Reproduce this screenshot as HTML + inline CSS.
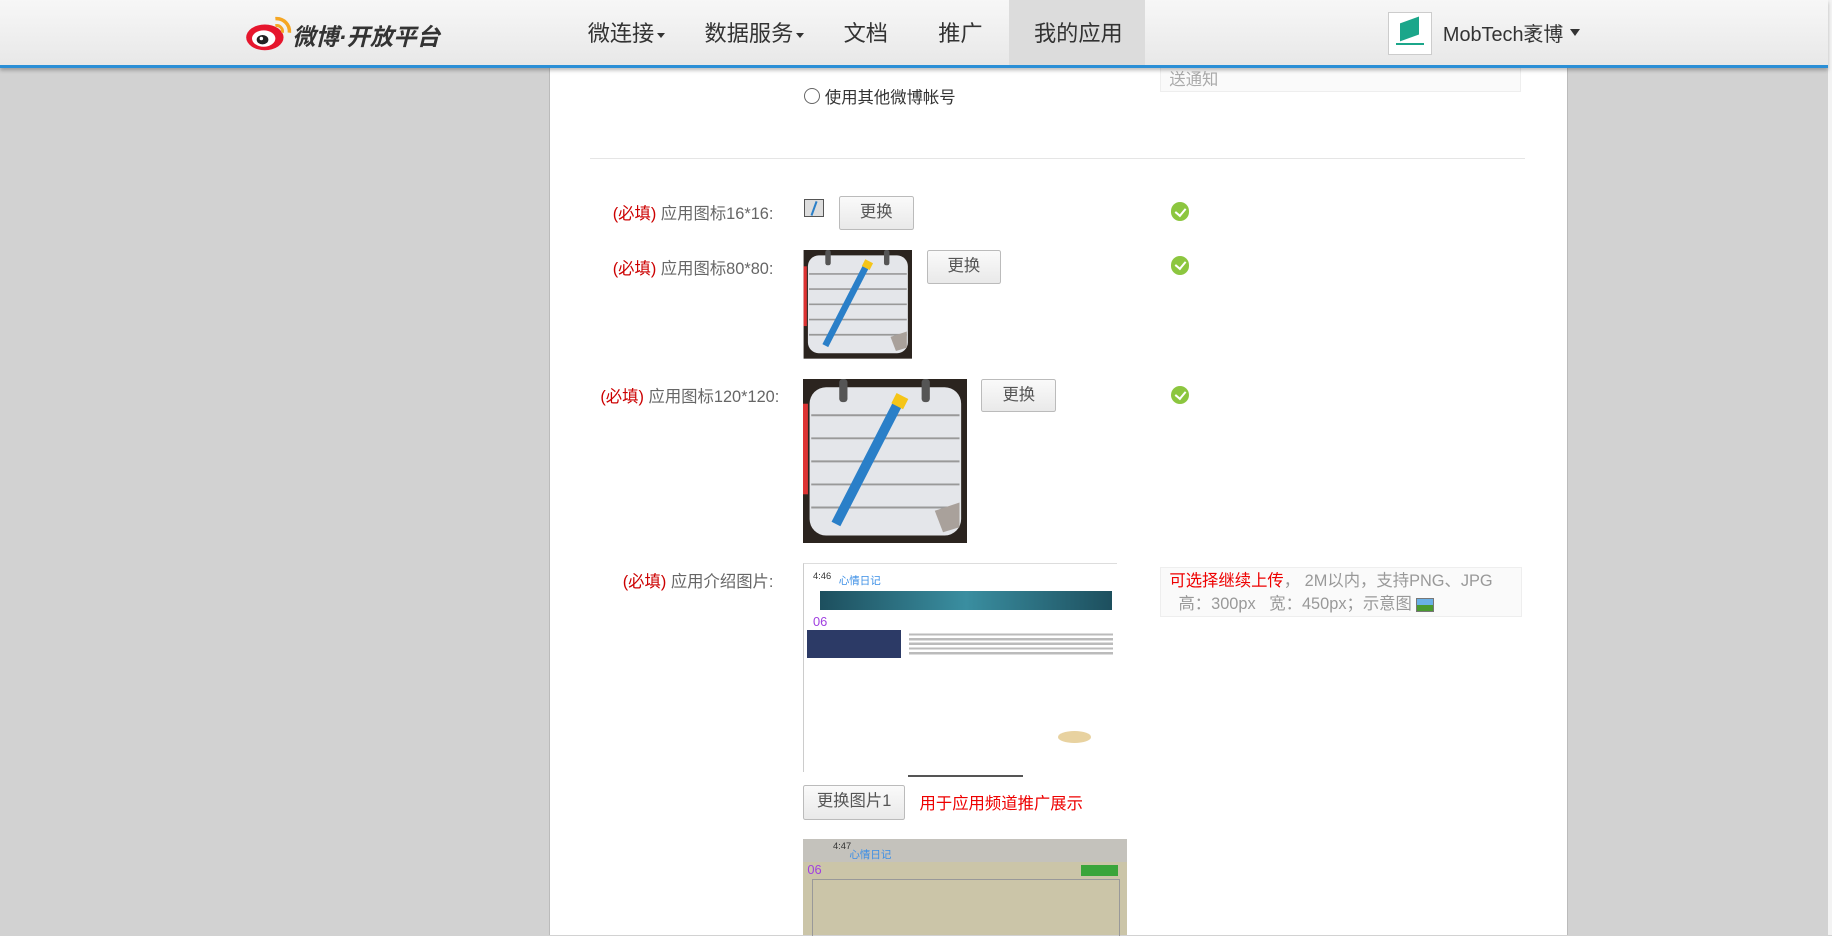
<!DOCTYPE html>
<html><head><meta charset="utf-8">
<style>
html{zoom:1.16837}
body{margin:0;width:1568px;height:800px;overflow:hidden;background:#d2d2d2;font-family:"Liberation Sans","Noto Sans CJK SC",sans-serif;position:relative}
.a{position:absolute}
#hdr{left:0;top:0;width:1565px;height:56px;background:linear-gradient(#f7f7f7,#e8e8e8);border-bottom:3px solid #2b8fd6;box-shadow:0 2px 3px rgba(0,0,0,.25);z-index:5}
.nav{top:14px;font-size:19px;color:#333}
.tri{display:inline-block;width:0;height:0;border-left:4px solid transparent;border-right:4px solid transparent;border-top:5px solid #333;vertical-align:middle;margin-left:2px}
#panel{left:470px;top:0;width:870px;height:800px;background:#fff;border-left:1px solid #bbb;border-right:1px solid #bbb}
.lbl{font-size:14px;color:#666;text-align:right;width:200px;left:462px}
.lbl b{color:#c00;font-weight:normal}
.btn{border:1px solid #bbb;border-radius:2px;background:linear-gradient(#fafafa,#e9e9e9);font-size:14px;color:#555;text-align:center;box-sizing:border-box;height:29px;line-height:27px}
.chk{width:16px;height:16px;border-radius:50%;background:#8cc63f;left:1002px}
.chk:after{content:"";position:absolute;left:5px;top:3px;width:4px;height:7px;border:solid #fff;border-width:0 2px 2px 0;transform:rotate(40deg)}
</style></head><body>
<div class="a" style="left:1565px;top:0;width:3px;height:800px;background:#f3f3f3"></div>
<div class="a" id="panel"></div>
<div class="a" id="hdr">
 <svg class="a" style="left:210px;top:12px" width="42" height="32" viewBox="0 0 42 32">
  <ellipse cx="17" cy="20" rx="16" ry="11" fill="#e6162d"/>
  <ellipse cx="16" cy="21" rx="10" ry="7" fill="#fff"/>
  <ellipse cx="15" cy="22" rx="5" ry="4" fill="#222"/>
  <circle cx="14" cy="21" r="1.5" fill="#fff"/>
  <path d="M26 4a11 11 0 0 1 12 12" stroke="#f5a623" stroke-width="3" fill="none"/>
  <path d="M26 10a5 5 0 0 1 6 6" stroke="#f5a623" stroke-width="2.5" fill="none"/>
 </svg>
 <div class="a" style="left:250px;top:15px;font-size:20px;font-weight:bold;font-style:italic;color:#333">微博·开放平台</div>
 <div class="a" style="left:864px;top:0;width:116px;height:56px;background:#dcdcdc"></div>
 <div class="a nav" style="left:503px">微连接<span class="tri"></span></div>
 <div class="a nav" style="left:603px">数据服务<span class="tri"></span></div>
 <div class="a nav" style="left:722px">文档</div>
 <div class="a nav" style="left:803px">推广</div>
 <div class="a nav" style="left:885px">我的应用</div>
 <div class="a" style="left:1188px;top:10px;width:36px;height:35px;background:#fff;border:1px solid #ccc">
  <div class="a" style="left:9px;top:6px;width:16px;height:15px;background:#1ba68a;transform:skewY(-20deg)"></div>
  <div class="a" style="left:6px;top:26px;width:24px;height:2px;background:#1ba68a"></div>
 </div>
 <div class="a" style="left:1235px;top:15px;font-size:17px;color:#333">MobTech袤博</div>
 <div class="a" style="left:1344px;top:25px;border-left:5px solid transparent;border-right:5px solid transparent;border-top:6px solid #333"></div>
</div>

<div class="a" style="left:688px;top:75px;width:12px;height:12px;border:1px solid #666;border-radius:50%"></div>
<div class="a" style="left:706px;top:72px;font-size:14px;color:#333">使用其他微博帐号</div>
<div class="a" style="left:993px;top:56px;width:309px;height:23px;background:#fafafa;border:1px solid #eee;font-size:14px;color:#aaa;line-height:24px;padding-left:7px;box-sizing:border-box">送通知</div>
<div class="a" style="left:505px;top:135px;width:800px;height:1px;background:#e5e5e5"></div>

<div class="a lbl" style="top:171px"><b>(必填)</b> 应用图标16*16:</div>
<div class="a" style="left:688px;top:170px;width:17px;height:16px;background:#ddd;border:1px solid #555;box-sizing:border-box"><div class="a" style="left:7px;top:1px;width:2px;height:13px;background:#2a7fc8;transform:rotate(20deg)"></div></div>
<div class="a btn" style="left:718px;top:168px;width:64px">更换</div>
<div class="a chk" style="top:173px"></div>

<div class="a lbl" style="top:218px"><b>(必填)</b> 应用图标80*80:</div>
<svg class="a" style="left:687px;top:214px" width="94" height="93" viewBox="0 0 100 100">
 <rect width="100" height="100" fill="#2b241f"/>
 <rect x="4" y="5" width="92" height="90" rx="10" fill="#e4e6ea"/>
 <g stroke="#999" stroke-width="1.5"><line x1="5" y1="22" x2="95" y2="22"/><line x1="5" y1="36" x2="95" y2="36"/><line x1="5" y1="50" x2="95" y2="50"/><line x1="5" y1="64" x2="95" y2="64"/><line x1="5" y1="78" x2="95" y2="78"/></g>
 <rect x="0" y="15" width="3" height="55" fill="#d33"/>
 <rect x="20" y="0" width="5" height="14" rx="2" fill="#555"/><rect x="74" y="0" width="5" height="14" rx="2" fill="#555"/>
 <path d="M80 80 L95 75 L95 90 L85 93 Z" fill="#a9a19b"/>
 <line x1="58" y1="14" x2="20" y2="88" stroke="#2a7fc8" stroke-width="6"/>
 <rect x="55" y="10" width="8" height="7" fill="#f5c518" transform="rotate(27 59 13)"/>
</svg>
<div class="a btn" style="left:793px;top:214px;width:64px">更换</div>
<div class="a chk" style="top:219px"></div>

<div class="a lbl" style="top:328px;left:467px;width:200px"><b>(必填)</b> 应用图标120*120:</div>
<svg class="a" style="left:687px;top:324px" width="141" height="141" viewBox="0 0 100 100">
 <rect width="100" height="100" fill="#2b241f"/>
 <rect x="4" y="5" width="92" height="90" rx="10" fill="#e4e6ea"/>
 <g stroke="#999" stroke-width="1.2"><line x1="5" y1="22" x2="95" y2="22"/><line x1="5" y1="36" x2="95" y2="36"/><line x1="5" y1="50" x2="95" y2="50"/><line x1="5" y1="64" x2="95" y2="64"/><line x1="5" y1="78" x2="95" y2="78"/></g>
 <rect x="0" y="15" width="3" height="55" fill="#d33"/>
 <rect x="22" y="0" width="5" height="14" rx="2" fill="#555"/><rect x="72" y="0" width="5" height="14" rx="2" fill="#555"/>
 <path d="M80 80 L95 75 L95 90 L85 93 Z" fill="#a9a19b"/>
 <line x1="58" y1="14" x2="20" y2="88" stroke="#2a7fc8" stroke-width="6"/>
 <rect x="55" y="10" width="8" height="7" fill="#f5c518" transform="rotate(27 59 13)"/>
</svg>
<div class="a btn" style="left:840px;top:324px;width:64px">更换</div>
<div class="a chk" style="top:330px"></div>

<div class="a lbl" style="top:486px"><b>(必填)</b> 应用介绍图片:</div>
<div class="a" style="left:687px;top:482px;width:268px;height:178px;border-left:1px solid #ccc;border-top:1px solid #ddd;background:#fff;overflow:hidden">
 <div class="a" style="left:8px;top:6px;font-size:8px;color:#333">4:46</div>
 <div class="a" style="left:30px;top:8px;font-size:9px;color:#3a8ee6">心情日记</div>
 <div class="a" style="left:14px;top:23px;width:250px;height:16px;background:linear-gradient(90deg,#1d4f5e,#3a8ea0,#1d4f5e)"></div>
 <div class="a" style="left:8px;top:43px;font-size:11px;color:#a040e0">06</div>
 <div class="a" style="left:3px;top:56px;width:80px;height:24px;background:#2c3a66"></div>
 <div class="a" style="left:90px;top:57px;width:175px;height:22px;background:repeating-linear-gradient(#fff 0,#fff 2px,#bbb 2px,#bbb 4px)"></div>
 <div class="a" style="left:218px;top:143px;width:28px;height:10px;border-radius:50%;background:#e8d2a0"></div>
</div>
<div class="a" style="left:777px;top:663px;width:99px;height:2px;background:#555"></div>
<div class="a" style="left:993px;top:485px;width:310px;height:43px;background:#fafafa;border:1px solid #eee;box-sizing:border-box;font-size:14px;color:#999;padding:2px 0 0 7px;line-height:20px"><span style="color:#e00">可选择继续上传</span>， 2M以内，支持PNG、JPG<br>&nbsp;&nbsp;高：300px &nbsp;&nbsp;宽：450px；示意图 <span style="display:inline-block;width:13px;height:11px;background:linear-gradient(#6ab0e6 50%,#4a9a30 50%);border:1px solid #777;vertical-align:middle"></span></div>

<div class="a btn" style="left:687px;top:672px;width:88px;height:30px">更换图片1</div>
<div class="a" style="left:787px;top:676px;font-size:14px;color:#e00">用于应用频道推广展示</div>

<div class="a" style="left:687px;top:718px;width:278px;height:82px;background:#cbc5a8">
 <div class="a" style="left:0;top:0;width:278px;height:20px;background:#c4c2bc"></div>
 <div class="a" style="left:26px;top:2px;font-size:8px;color:#333">4:47</div>
 <div class="a" style="left:40px;top:7px;font-size:9px;color:#3a8ee6">心情日记</div>
 <div class="a" style="left:4px;top:20px;font-size:11px;color:#a040e0">06</div>
 <div class="a" style="left:238px;top:22px;width:32px;height:10px;background:#3aa53a"></div>
 <div class="a" style="left:8px;top:34px;width:262px;height:48px;border:1px solid #999;border-bottom:none"></div>
</div>
</body></html>
